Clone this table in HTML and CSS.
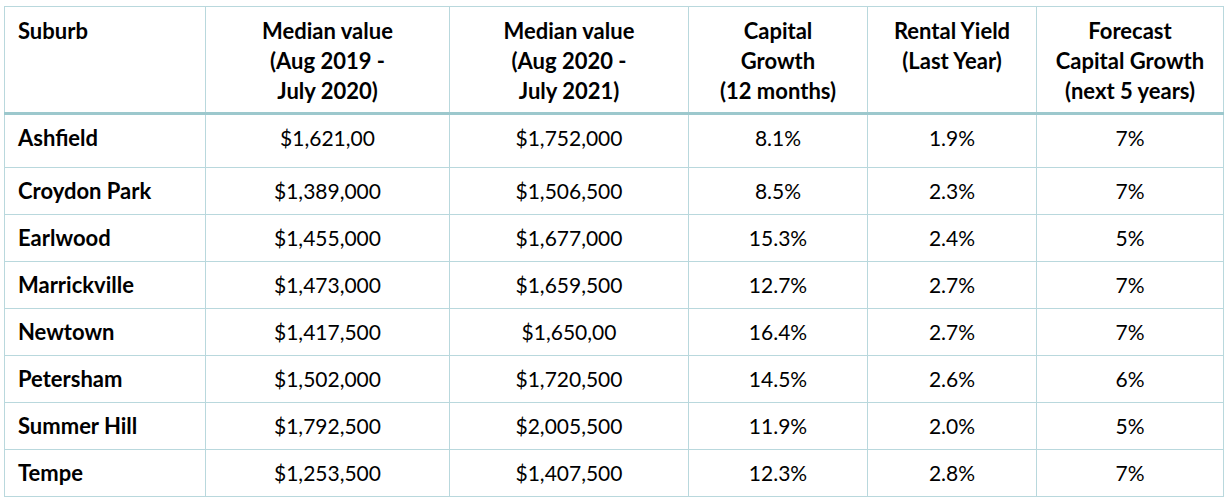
FILE: index.html
```html
<!DOCTYPE html>
<html lang="en">
<head>
<meta charset="utf-8">
<title>Suburb median values</title>
<link rel="stylesheet" href="styles.css">
</head>
<body>
<table class="data">
  <colgroup>
    <col class="c1"><col class="c2"><col class="c3"><col class="c4"><col class="c5"><col class="c6">
  </colgroup>
  <thead>
    <tr class="head">
      <th class="name">Suburb</th>
      <th>Median value<br>(Aug 2019 -<br>July 2020)</th>
      <th>Median value<br>(Aug 2020 -<br>July 2021)</th>
      <th>Capital<br>Growth<br>(12 months)</th>
      <th>Rental Yield<br>(Last Year)</th>
      <th>Forecast<br>Capital Growth<br>(next 5 years)</th>
    </tr>
  </thead>
  <tbody>
    <tr class="first"><td class="name">Ashfield</td><td>$1,621,00</td><td>$1,752,000</td><td>8.1%</td><td>1.9%</td><td>7%</td></tr>
    <tr><td class="name">Croydon Park</td><td>$1,389,000</td><td>$1,506,500</td><td>8.5%</td><td>2.3%</td><td>7%</td></tr>
    <tr><td class="name">Earlwood</td><td>$1,455,000</td><td>$1,677,000</td><td>15.3%</td><td>2.4%</td><td>5%</td></tr>
    <tr><td class="name">Marrickville</td><td>$1,473,000</td><td>$1,659,500</td><td>12.7%</td><td>2.7%</td><td>7%</td></tr>
    <tr><td class="name">Newtown</td><td>$1,417,500</td><td>$1,650,00</td><td>16.4%</td><td>2.7%</td><td>7%</td></tr>
    <tr><td class="name">Petersham</td><td>$1,502,000</td><td>$1,720,500</td><td>14.5%</td><td>2.6%</td><td>6%</td></tr>
    <tr><td class="name">Summer Hill</td><td>$1,792,500</td><td>$2,005,500</td><td>11.9%</td><td>2.0%</td><td>5%</td></tr>
    <tr><td class="name">Tempe</td><td>$1,253,500</td><td>$1,407,500</td><td>12.3%</td><td>2.8%</td><td>7%</td></tr>
  </tbody>
</table>
</body>
</html>
```

FILE: styles.css
```css
html, body {
  margin: 0;
  padding: 0;
  background: #ffffff;
}

body {
  padding: 6px 0 0 4px;
  font-family: Lato, "Open Sans", sans-serif;
  color: #000000;
}

.data {
  border-collapse: collapse;
  table-layout: fixed;
  width: 1219px;
  font-size: 21px;
}

.c1 { width: 201px; }
.c2 { width: 244px; }
.c3 { width: 239px; }
.c4 { width: 179px; }
.c5 { width: 169px; }
.c6 { width: 187px; }

.data th,
.data td {
  border: 1px solid #b9d8dd;
  text-align: center;
  vertical-align: top;
  padding: 0 4px;
}

.data th {
  font-weight: 700;
  font-size: 22px;
  line-height: 30px;
  padding-top: 9px;
  border-bottom: 3px solid #9cc8cd;
}

.data td {
  line-height: 24px;
  padding-top: 11px;
  font-weight: 400;
}

.data .name {
  text-align: left;
  padding-left: 13px;
  font-weight: 700;
  font-size: 22px;
}

.head { height: 107px; }
tbody tr { height: 47px; }
tbody tr.first { height: 54px; }
```
